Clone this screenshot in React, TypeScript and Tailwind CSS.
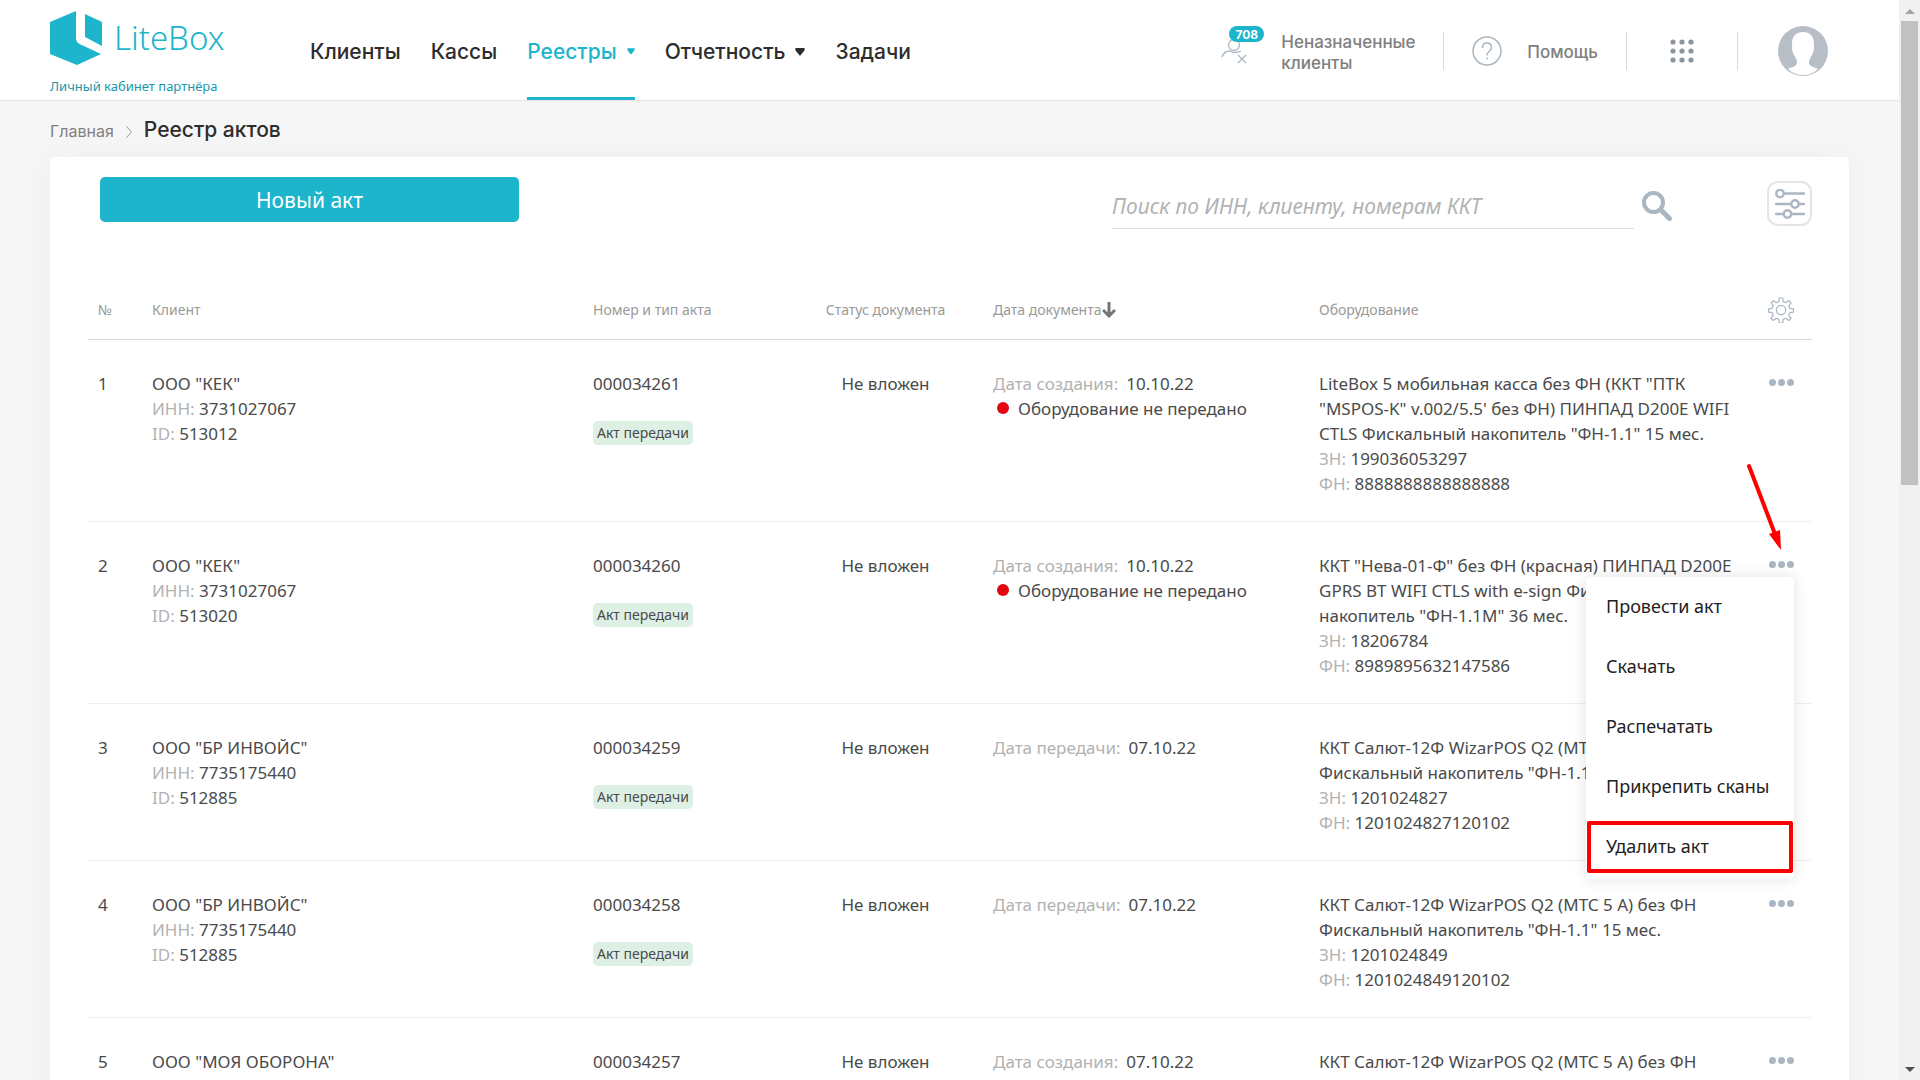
import type { ReactNode } from 'react';

type Act = {
  id: number;
  client: string;
  inn: string;
  clientId: string;
  number: string;
  dateLabel: string;
  date: string;
  notTransferred?: boolean;
  equipment: string;
  serial: string;
  fiscal: string;
};

const acts: Act[] = [
  {
    id: 1,
    client: 'ООО "КЕК"',
    inn: '3731027067',
    clientId: '513012',
    number: '000034261',
    dateLabel: 'Дата создания:',
    date: '10.10.22',
    notTransferred: true,
    equipment:
      'LiteBox 5 мобильная касса без ФН (ККТ "ПТК\n"MSPOS-K" v.002/5.5\' без ФН) ПИНПАД D200E WIFI\nCTLS Фискальный накопитель "ФН-1.1" 15 мес.',
    serial: '199036053297',
    fiscal: '8888888888888888',
  },
  {
    id: 2,
    client: 'ООО "КЕК"',
    inn: '3731027067',
    clientId: '513020',
    number: '000034260',
    dateLabel: 'Дата создания:',
    date: '10.10.22',
    notTransferred: true,
    equipment:
      'ККТ "Нева-01-Ф" без ФН (красная) ПИНПАД D200E\nGPRS BT WIFI CTLS with e-sign Фискальный\nнакопитель "ФН-1.1М" 36 мес.',
    serial: '18206784',
    fiscal: '8989895632147586',
  },
  {
    id: 3,
    client: 'ООО "БР ИНВОЙС"',
    inn: '7735175440',
    clientId: '512885',
    number: '000034259',
    dateLabel: 'Дата передачи:',
    date: '07.10.22',
    equipment: 'ККТ Салют-12Ф WizarPOS Q2 (МТС 5 А) без ФН\nФискальный накопитель "ФН-1.1М" 36 мес.',
    serial: '1201024827',
    fiscal: '1201024827120102',
  },
  {
    id: 4,
    client: 'ООО "БР ИНВОЙС"',
    inn: '7735175440',
    clientId: '512885',
    number: '000034258',
    dateLabel: 'Дата передачи:',
    date: '07.10.22',
    equipment: 'ККТ Салют-12Ф WizarPOS Q2 (МТС 5 А) без ФН\nФискальный накопитель "ФН-1.1" 15 мес.',
    serial: '1201024849',
    fiscal: '1201024849120102',
  },
  {
    id: 5,
    client: 'ООО "МОЯ ОБОРОНА"',
    inn: '7735175440',
    clientId: '512884',
    number: '000034257',
    dateLabel: 'Дата создания:',
    date: '07.10.22',
    equipment: 'ККТ Салют-12Ф WizarPOS Q2 (МТС 5 А) без ФН\nФискальный накопитель "ФН-1.1" 15 мес.',
    serial: '1201024850',
    fiscal: '1201024850120102',
  },
];

const menuItems = ['Провести акт', 'Скачать', 'Распечатать', 'Прикрепить сканы', 'Удалить акт'];

function Logo() {
  return (
    <a href="#" className="flex w-[175px] shrink-0 flex-col text-[#1cb5cc]">
      <span className="flex items-center gap-3">
        <svg viewBox="0 0 52 54" className="h-[54px] w-[52px] shrink-0" fill="currentColor">
          <path d="M26 0v27q0 4 3.500 6L51 43 27 54 0 43V11z" />
          <path d="M35 3l17 8v24L35 26z" />
        </svg>
        <span className="text-[33px] leading-[38px] font-light">LiteBox</span>
      </span>
      <span className="mt-3 text-[13px] leading-[18px] whitespace-nowrap text-[#1b96a9]">Личный кабинет партнёра</span>
    </a>
  );
}

function Caret({ className }: { className: string }) {
  return (
    <svg viewBox="0 0 10 8" className={className} fill="currentColor">
      <path d="M1.200 0h7.600q1.200 0 1 1.200-.3 1.400-1.600 2.800L5.800 7q-.8 1-1.600 0L1.800 4Q.5 2.600.2 1.200 0 0 1.200 0z" />
    </svg>
  );
}

function NavLink({ children, active, caret }: { children: ReactNode; active?: boolean; caret?: boolean }) {
  return (
    <a
      href="#"
      className={`flex items-center gap-[10px] border-b-3 pt-[6px] ${
        active ? 'border-[#1cb5cc] text-[#1cb5cc]' : 'border-transparent text-[#2d2d2d]'
      }`}
    >
      {children}
      {caret && <Caret className={active ? 'h-[7px] w-2' : 'h-2 w-[10px]'} />}
    </a>
  );
}

function Header() {
  return (
    <header className="flex h-[101px] items-stretch border-b border-[#e6e6e6] bg-white pr-[71px] pl-[50px] font-['Inter',sans-serif]">
      <div className="flex items-start pt-[11px] font-['Noto_Sans',sans-serif]">
        <Logo />
      </div>
      <nav className="ml-[85px] flex items-stretch gap-[30px] text-[21px] font-medium">
        <NavLink>Клиенты</NavLink>
        <NavLink>Кассы</NavLink>
        <NavLink active caret>Реестры</NavLink>
        <NavLink caret>Отчетность</NavLink>
        <NavLink>Задачи</NavLink>
      </nav>

      <div className="ml-auto flex items-center pt-[2px] text-[17px] leading-[21px] font-medium text-[#808080]">
        <a href="#" className="flex items-center gap-[17px]">
          <span className="relative h-[50px] w-[43px]">
            <svg viewBox="0 0 30 30" className="absolute top-[11px] left-0 h-[30px] w-[30px]" fill="none" stroke="#aab6c1" strokeWidth="1.300">
              <circle cx="13" cy="8" r="5.500" />
              <path d="M1 20q2-6 8-6 5 3 11 0M17 18l8 8M25 18l-8 8" />
            </svg>
            <span className="absolute top-0 left-[8px] flex h-4 w-[35px] items-center justify-center rounded-full bg-[#1cb5cc] text-[12px] font-bold text-white">
              708
            </span>
          </span>
          <span className="w-[140px] pt-1">Неназначенные клиенты</span>
        </a>
        <span className="ml-[22px] h-[38px] w-px bg-[#dadada]" />
        <a href="#" className="ml-7 flex items-center gap-[25px]">
          <svg viewBox="0 0 30 30" className="h-[30px] w-[30px]" fill="none" stroke="#aab6c1" strokeWidth="1.500">
            <circle cx="15" cy="15" r="14" />
            <path d="M10.500 12q0-5 4.500-5t4.500 4.500q0 2-2.500 4t-2 4" />
            <path d="M15 21.500v2" />
          </svg>
          <span className="pt-[2px]">Помощь</span>
        </a>
        <span className="ml-7 h-[38px] w-px bg-[#dadada]" />
        <button type="button" aria-label="Приложения" className="ml-[43px]">
          <svg viewBox="0 0 24 24" className="h-6 w-6" fill="#8b95a0">
            {[3, 12, 21].map((y) => [3, 12, 21].map((x) => <circle key={`${x}-${y}`} cx={x} cy={y} r="2.600" />))}
          </svg>
        </button>
        <span className="ml-[43px] h-[38px] w-px bg-[#dadada]" />
        <button type="button" aria-label="Профиль" className="ml-10">
          <svg viewBox="0 0 50 50" className="h-[50px] w-[50px]">
            <circle cx="25" cy="25" r="25" fill="#b7bec5" />
            <path
              d="M25 6c8 0 11 5 11 12 0 4 0 6-1 9-2 4-4 6-4 9 0 5 6 5 9 7q-6 6-15 6T10 43c3-2 9-2 9-7 0-3-2-5-4-9-1-3-1-5-1-9 0-7 3-12 11-12z"
              fill="#fff"
            />
          </svg>
        </button>
      </div>
    </header>
  );
}

function Toolbar() {
  return (
    <div className="flex items-start pr-[37px] pl-[50px]">
      <button type="button" className="h-[45px] w-[419px] rounded-[5px] bg-[#1cb5cc] pt-[2px] text-[21px] text-white">
        Новый акт
      </button>
      <form className="mt-[6px] ml-auto flex items-center">
        <input
          type="search"
          aria-label="Поиск"
          placeholder="Поиск по ИНН, клиенту, номерам ККТ"
          className="h-[46px] w-[522px] border-b border-[#dedede] text-[21px] italic outline-none placeholder:text-[#b2b2b2]"
        />
        <button type="submit" aria-label="Найти" className="ml-2">
          <svg viewBox="0 0 30 30" className="h-[30px] w-[30px]" fill="none" stroke="#aab6c1">
            <circle cx="11.500" cy="11.500" r="9.500" strokeWidth="4" />
            <path d="M19 19l8.500 8.500" strokeWidth="5" strokeLinecap="round" />
          </svg>
        </button>
      </form>
      <button
        type="button"
        aria-label="Фильтры"
        className="mt-1 ml-[95px] flex h-[45px] w-[45px] items-center justify-center rounded-[11px] border-2 border-[#e3e5e7]"
      >
        <svg viewBox="0 0 30 30" className="h-[30px] w-[30px]" fill="none" stroke="#aab6c1" strokeWidth="2.400" strokeLinecap="round">
          <circle cx="5" cy="4.500" r="3.700" />
          <circle cx="20" cy="15" r="3.700" />
          <circle cx="12.500" cy="25" r="3.700" />
          <path d="M9 4.500h20M1 15h15M24 15h5M1 25h7.500M16.500 25H29" />
        </svg>
      </button>
    </div>
  );
}

function RowMenu() {
  return (
    <div className="absolute top-[55px] right-[18px] z-10 w-[208px] rounded-[4px] bg-white pb-[2px] shadow-[0_0_15px_rgba(0,0,0,0.12)]">
      {menuItems.map((item, i) => (
        <button
          key={item}
          type="button"
          className="relative flex h-[60px] w-full items-center pl-5 text-left text-[18px] whitespace-nowrap text-[#222]"
        >
          {item}
          {i === menuItems.length - 1 && (
            <span className="absolute inset-x-px top-1 bottom-1 rounded-[2px] border-4 border-[#fe0000]" />
          )}
        </button>
      ))}
    </div>
  );
}

function Pointer() {
  return (
    <svg viewBox="0 0 40 90" className="absolute -top-[60px] right-[26px] z-10 h-[90px] w-[40px]" fill="#fe0000">
      <path d="M3 4l26 68" stroke="#fe0000" strokeWidth="4" strokeLinecap="round" />
      <path d="M23 72l11-4 1 20z" />
    </svg>
  );
}

function Field({ label, value }: { label: string; value: string }) {
  return (
    <div>
      <span className="text-[#b2b2b2]">{label}</span> {value}
    </div>
  );
}

function ActRow({ act, menuOpen }: { act: Act; menuOpen: boolean }) {
  return (
    <tr className="border-b border-[#efefef] align-top [&>td]:px-[10px] [&>td]:pt-[31px] [&>td]:pb-[25px]">
      <td>{act.id}</td>
      <td>
        <div>{act.client}</div>
        <Field label="ИНН:" value={act.inn} />
        <Field label="ID:" value={act.clientId} />
      </td>
      <td>
        <div>{act.number}</div>
        <span className="mt-[25px] inline-block h-6 rounded-[5px] bg-[#def0e4] px-1 text-[14px] leading-6">
          Акт передачи
        </span>
      </td>
      <td className="text-center">Не вложен</td>
      <td>
        <div className="flex gap-2">
          <span className="text-[#b2b2b2]">{act.dateLabel}</span>
          <span>{act.date}</span>
        </div>
        {act.notTransferred && (
          <div className="flex items-center gap-[9px] pl-1">
            <span className="h-3 w-3 rounded-full bg-[#e30613]" />
            Оборудование не передано
          </div>
        )}
      </td>
      <td>
        <div className="whitespace-pre">{act.equipment}</div>
        <Field label="ЗН:" value={act.serial} />
        <Field label="ФН:" value={act.fiscal} />
      </td>
      <td className="relative">
        <button type="button" aria-label="Действия" className="flex h-6 w-full items-center justify-center gap-[2px]">
          <span className="h-[7px] w-[7px] rounded-full bg-[#aab6c1]" />
          <span className="h-[7px] w-[7px] rounded-full bg-[#aab6c1]" />
          <span className="h-[7px] w-[7px] rounded-full bg-[#aab6c1]" />
        </button>
        {menuOpen && <Pointer />}
        {menuOpen && <RowMenu />}
      </td>
    </tr>
  );
}

function ActsTable() {
  return (
    <table className="mt-[54px] w-full table-fixed border-collapse text-[17px] leading-[25px] text-[#4a4a4a]">
      <colgroup>
        <col className="w-[54px]" />
        <col />
        <col className="w-[205px]" />
        <col className="w-[195px]" />
        <col className="w-[326px]" />
        <col />
        <col className="w-[62px]" />
      </colgroup>
      <thead>
        <tr className="h-[56px] border-b border-[#d9d9d9] text-left align-top text-[14px] text-[#999] [&>th]:px-[10px] [&>th]:pt-[14px] [&>th]:font-normal">
          <th>№</th>
          <th>Клиент</th>
          <th>Номер и тип акта</th>
          <th className="text-center">Статус документа</th>
          <th>
            <span className="flex items-center">
              Дата документа
              <svg viewBox="0 0 14 16" className="h-4 w-[14px]" fill="none" stroke="#757575" strokeWidth="3">
                <path d="M7 0v14M1 8l6 6 6-6" />
              </svg>
            </span>
          </th>
          <th>Оборудование</th>
          <th>
            <button type="button" aria-label="Настройка таблицы" className="flex w-full justify-center">
              <GearIcon />
            </button>
          </th>
        </tr>
      </thead>
      <tbody>
        {acts.map((act) => (
          <ActRow key={act.id} act={act} menuOpen={act.id === 2} />
        ))}
      </tbody>
    </table>
  );
}

function GearIcon() {
  return (
    <svg viewBox="0 0 26 26" className="h-[26px] w-[26px]" fill="none" stroke="#aab6c1" strokeWidth="1.200" strokeLinejoin="round">
      <circle cx="13" cy="13" r="4.700" />
      <path d="M11.300 1h3.400l.5 3.600 2.600 1.100 2.900-2.200 2.300 2.300-2.200 2.900 1.100 2.600 3.600.5v3.400l-3.600.5-1.100 2.600 2.200 2.900-2.300 2.300-2.900-2.200-2.600 1.100-.5 3.600h-3.400l-.5-3.600-2.600-1.100-2.900 2.200-2.300-2.300 2.200-2.900-1.100-2.600L.6 15.200v-3.400l3.600-.5 1.100-2.600-2.200-2.900 2.300-2.300 2.900 2.200 2.600-1.100z" />
    </svg>
  );
}

function Scrollbar() {
  return (
    <div className="flex w-[21px] shrink-0 flex-col items-center bg-[#f1f1f1]">
      <svg viewBox="0 0 20 21" className="h-[21px] w-5" fill="#a3a3a3">
        <path d="M5 14l5-5 5 5z" />
      </svg>
      <div className="h-[43%] w-[17px] bg-[#c1c1c1]" />
      <svg viewBox="0 0 20 21" className="mt-auto h-[21px] w-5" fill="#505050">
        <path d="M5 8l5 5 5-5z" />
      </svg>
    </div>
  );
}

export default function App() {
  return (
    <div className="flex h-screen overflow-hidden bg-[#f6f6f6] font-['Noto_Sans',sans-serif]">
      <div className="min-w-0 flex-1">
        <Header />
        <div className="flex h-14 items-center px-[50px] pt-[2px] font-['Inter',sans-serif]">
          <a href="#" className="pt-[2px] text-[16px] text-[#808080]">Главная</a>
          <svg viewBox="0 0 6 12" className="mx-3 mt-1 h-3 w-[6px]" fill="none" stroke="#999">
            <path d="M.5.5l5 5.500-5 5.500" />
          </svg>
          <h1 className="text-[21px] font-medium text-[#2d2d2d]">Реестр актов</h1>
        </div>
        <main className="mx-[50px] rounded-[5px] bg-white pt-5 shadow-[0_0_30px_rgba(0,0,0,0.04)]">
          <Toolbar />
          <div className="pr-[37px] pl-[38px]">
            <ActsTable />
          </div>
        </main>
      </div>
      <Scrollbar />
    </div>
  );
}
